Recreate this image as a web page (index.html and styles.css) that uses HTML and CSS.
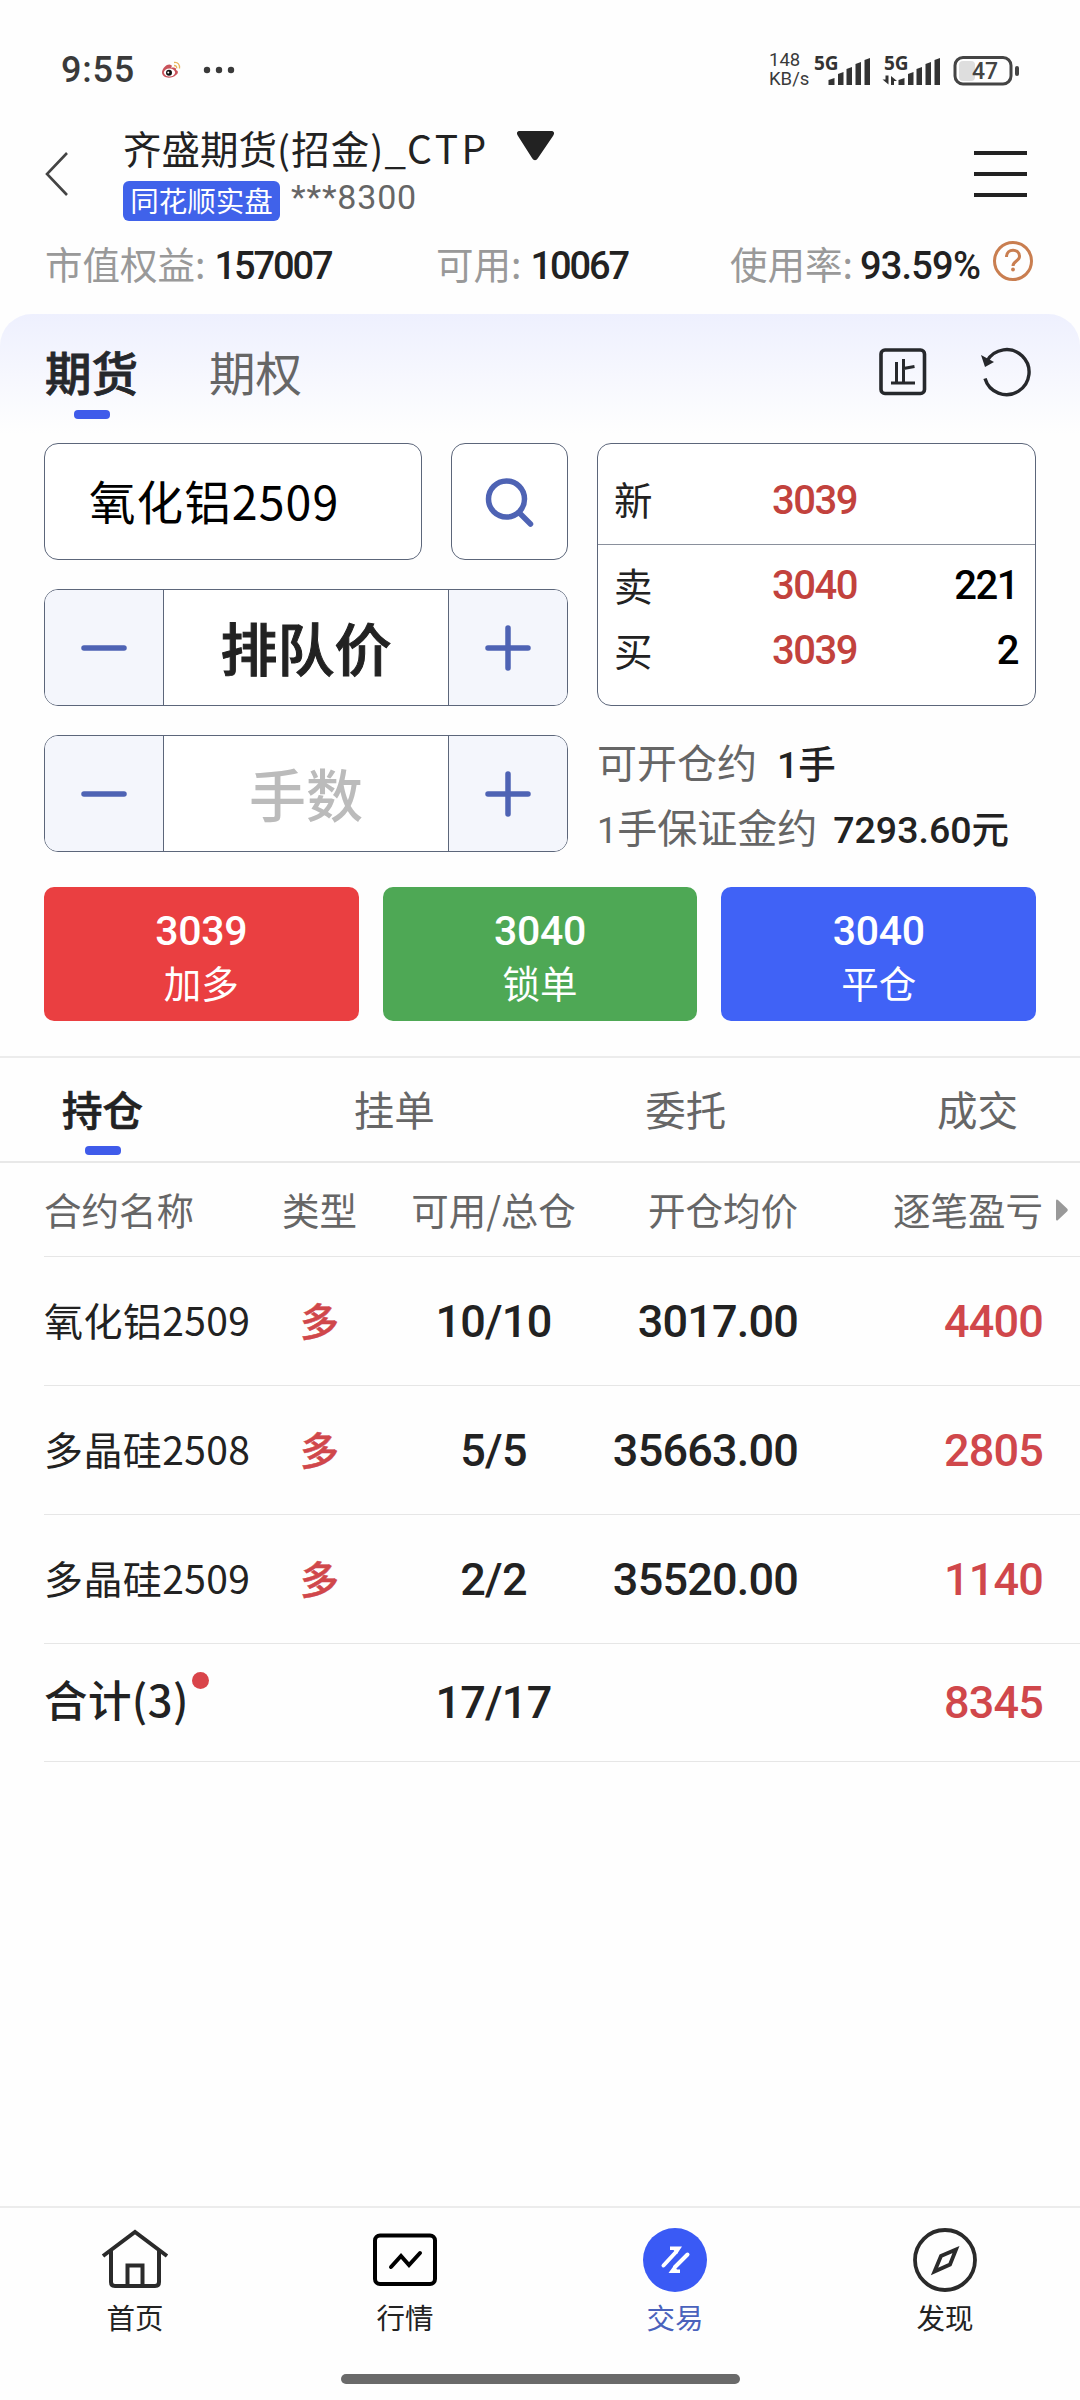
FILE: index.html
```html
<!DOCTYPE html>
<html lang="zh-CN">
<head>
<meta charset="utf-8">
<title>期货交易</title>
<link rel="stylesheet" href="styles.css">
</head>
<body>
<div class="page">
    <div class="status">
        <span class="time num">9:55</span>
        <svg class="weibo" width="20" height="18" viewBox="0 0 20 18">
            <path d="M1 11C2 6 7 2 10 4c1 0 1 2 0 3 3-1 6 0 5 2 3 1 2 4 0 5-4 4-14 4-14-3z" fill="#c8525a"/>
            <ellipse cx="8.5" cy="11.5" rx="5.6" ry="4" fill="#fff"/>
            <circle cx="8" cy="11.8" r="3" fill="#111"/>
            <circle cx="7.3" cy="11.4" r="1" fill="#fff"/>
            <path d="M13 1.5c4-.5 6 2 5.500 6M13 4.500c2 0 3 1 2.700 2.800" fill="none" stroke="#e8b45c" stroke-width="1.3"/>
        </svg>
        <svg class="dots" width="32" height="8" viewBox="0 0 32 8">
            <circle cx="4" cy="4" r="3.2"/><circle cx="16" cy="4" r="3.2"/><circle cx="28" cy="4" r="3.2"/>
        </svg>
        <div class="speed"><span>148</span><span>KB/s</span></div>
        <svg class="signals" width="206" height="50" viewBox="-1 -8 206 50">
            <g fill="#333">
                <text x="0" y="17" class="net">5G</text>
                <path d="M14.500 32v-5l6-2v7zM24 32V21l5.500-2v13zM32.500 32V16l5.500-2v18zM41.500 32V11l5.500-2v23zM50.500 32V7l5.500-2v27z"/>
                <text x="70" y="17" class="net">5G</text>
                <path d="M84.500 32v-5l6-2v7zM94 32V21l5.500-2v13zM102.500 32V16l5.500-2v18zM111.500 32V11l5.500-2v23zM120.500 32V7l5.500-2v27z"/>
                <path d="M71.500 22.500h3v9l-6-5h3zM77 32v-9l6 5h-3v4z"/>
            </g>
            <rect x="145" y="8" width="16" height="20" rx="4" fill="#dedede"/>
            <rect x="141" y="4.500" width="56" height="26.500" rx="8" fill="none" stroke="#444" stroke-width="3"/>
            <rect x="201" y="13" width="4" height="10" rx="2" fill="#444"/>
            <text x="158" y="26" class="battery">47</text>
        </svg>
    </div>

    <div class="header">
        <svg class="back" width="24" height="48" viewBox="0 0 24 48">
            <path d="M22 3L2 24l20 21" fill="none" stroke="#444" stroke-width="2.600"/>
        </svg>
        <div class="account">
            <div class="account-name">齐盛期货<span class="firm">(招金)_</span><span class="ctp">CTP</span>
                <svg class="caret" width="37" height="30" viewBox="0 0 37 30">
                    <path d="M3 0h31c3 0 4 2 2 5L21 27c-2 3-4 3-6 0L1 5C-1 2 0 0 3 0z" fill="#222"/>
                </svg>
            </div>
            <div class="account-sub">
                <span class="badge">同花顺实盘</span>
                <span class="account-no num">***8300</span>
            </div>
        </div>
        <svg class="menu" width="53" height="48" viewBox="0 0 53 48">
            <path d="M0 3h53M0 24h53M0 45h53" stroke="#222" stroke-width="4.200"/>
        </svg>
    </div>

    <div class="assets">
        <div class="asset">市值权益:<b class="num">157007</b></div>
        <div class="asset asset-mid">可用:<b class="num">10067</b></div>
        <div class="asset asset-end">使用率:<b class="num">93.59%</b></div>
        <svg class="help" width="42" height="42" viewBox="0 0 42 42" fill="none" stroke="#c97e50" stroke-width="3">
            <circle cx="21" cy="21" r="18.500"/>
            <path d="M14.500 17c0-9 13-9 13-.500 0 4.500-6.500 4.500-6.500 9.500"/>
            <circle cx="21" cy="29.500" r="1.900" fill="#c97e50" stroke="none"/>
        </svg>
    </div>

    <div class="panel">
        <div class="kinds">
            <span class="kind active">期货</span>
            <span class="kind">期权</span>
            <svg class="stop" width="48" height="48" viewBox="0 0 48 48" fill="none" stroke="#26282c" stroke-width="3.600">
                <rect x="2" y="2" width="43.500" height="43.500" rx="4"/>
                <path d="M12 35h24M17.500 14v21M24.500 11v24M24.500 20.500l11-2" stroke-width="3"/>
            </svg>
            <svg class="refresh" width="52" height="52" viewBox="0 0 52 52">
                <path d="M5 32.500A22.500 22.500 0 1 0 7 15" fill="none" stroke="#26282c" stroke-width="3.400"/>
                <path d="M1 9l13 7-9 5z" fill="#26282c"/>
            </svg>
        </div>

        <div class="order">
            <div class="order-form">
                <div class="contract-row">
                    <div class="contract">氧化铝2509</div>
                    <div class="search">
                        <svg width="54" height="54" viewBox="0 0 54 54" fill="none" stroke="#4e63b4" stroke-width="5.500">
                            <circle cx="23.500" cy="24" r="18"/>
                            <path d="M36.500 38l11 11" stroke-linecap="round"/>
                        </svg>
                    </div>
                </div>
                <div class="stepper">
                    <div class="step"><svg width="46" height="46"><path d="M3 23h40"/></svg></div>
                    <div class="step-value">排队价</div>
                    <div class="step"><svg width="46" height="46"><path d="M3 23h40M23 3v40"/></svg></div>
                </div>
                <div class="stepper">
                    <div class="step"><svg width="46" height="46"><path d="M3 23h40"/></svg></div>
                    <div class="step-value placeholder">手数</div>
                    <div class="step"><svg width="46" height="46"><path d="M3 23h40M23 3v40"/></svg></div>
                </div>
            </div>
            <div class="order-side">
                <div class="quote">
                    <div class="quote-row last"><span>新</span><b class="num">3039</b></div>
                    <div class="quote-row"><span>卖</span><b class="num">3040</b><i class="num">221</i></div>
                    <div class="quote-row"><span>买</span><b class="num">3039</b><i class="num">2</i></div>
                </div>
                <div class="hint">可开仓约<b><span class="num">1</span>手</b></div>
                <div class="hint hint-margin"><span class="num one">1</span>手保证金约<b><span class="num">7293.60</span>元</b></div>
            </div>
        </div>

        <div class="actions">
            <div class="action buy"><span class="num">3039</span><span>加多</span></div>
            <div class="action lock"><span class="num">3040</span><span>锁单</span></div>
            <div class="action close"><span class="num">3040</span><span>平仓</span></div>
        </div>
    </div>

    <div class="tabs">
        <span class="tab active">持仓</span>
        <span class="tab">挂单</span>
        <span class="tab">委托</span>
        <span class="tab">成交</span>
    </div>

    <div class="table">
        <div class="row head">
            <span>合约名称</span><span>类型</span><span>可用/总仓</span><span class="price">开仓均价</span><span class="profit">逐笔盈亏</span>
            <svg class="more" width="13" height="22" viewBox="0 0 13 22"><path d="M1 2c0-1.500 1-2 2-1l9 8.500c1 1 1 2 0 3L3 21c-1 1-2 .500-2-1z" fill="#999"/></svg>
        </div>
        <div class="row">
            <span>氧化铝2509</span><span class="side">多</span><span class="num">10/10</span><span class="num price">3017.00</span><span class="num profit">4400</span>
        </div>
        <div class="row">
            <span>多晶硅2508</span><span class="side">多</span><span class="num">5/5</span><span class="num price">35663.00</span><span class="num profit">2805</span>
        </div>
        <div class="row">
            <span>多晶硅2509</span><span class="side">多</span><span class="num">2/2</span><span class="num price">35520.00</span><span class="num profit">1140</span>
        </div>
        <div class="row total">
            <span class="sum">合计(3)</span><span></span><span class="num">17/17</span><span></span><span class="num profit">8345</span>
        </div>
    </div>

    <div class="nav">
        <div class="nav-item">
            <svg width="70" height="66" viewBox="0 0 70 66" fill="none" stroke="#2a2a2a" stroke-width="4">
                <path d="M3 29L35 5l32 24M11 24v31q0 4 4 4h40q4 0 4-4V24M27.500 59V38.500h15V59"/>
            </svg>
            <span>首页</span>
        </div>
        <div class="nav-item">
            <svg width="70" height="66" viewBox="0 0 70 66" fill="none" stroke="#000" stroke-width="4">
                <rect x="5" y="8.500" width="60" height="48.500" rx="5"/>
                <path d="M21 40l10-11 8 9 11-12" stroke-linecap="round"/>
            </svg>
            <span>行情</span>
        </div>
        <div class="nav-item current">
            <svg width="70" height="66" viewBox="0 0 70 66">
                <circle cx="35" cy="33" r="32" fill="#3a5af5"/>
                <path d="M23.500 38.500L36 25M35 40L47.500 27.500" stroke="#fff" stroke-width="4" stroke-linecap="round"/>
                <path d="M30 19.500h12l-5 7.500-3.500-4H30zM28.500 46h11.500v-3.500h-3l-3-4z" fill="#fff"/>
            </svg>
            <span>交易</span>
        </div>
        <div class="nav-item">
            <svg width="70" height="66" viewBox="0 0 70 66" fill="none" stroke="#2a2a2a" stroke-width="3.800">
                <circle cx="35" cy="33" r="30"/>
                <path d="M46 22.500L31 29l-6.500 15.500L40 37.500z" stroke-width="3.800"/>
            </svg>
            <span>发现</span>
        </div>
    </div>
    <div class="home-bar"></div>
</div>
</body>
</html>
```

FILE: styles.css
```css
* {
    box-sizing: border-box;
}
body {
    margin: 0;
    background: #fefefe;
    color: #222;
    font-family: "Noto Sans CJK SC", sans-serif;
}
svg {
    display: block;
    flex: none;
}
b, i {
    font-style: normal;
    font-weight: 500;
}
.num {
    font-family: Roboto, "Noto Sans CJK SC", sans-serif;
    font-weight: 500;
}
.page {
    width: 1080px;
    height: 2400px;
    display: flex;
    flex-direction: column;
    overflow: hidden;
    white-space: nowrap;
}

/* status bar */
.status {
    height: 120px;
    padding: 20px 61px 0 61px;
    display: flex;
    align-items: center;
    color: #3a3a3a;
}
.time {
    width: 100px;
    font-size: 36px;
    letter-spacing: 0.8px;
}
.dots {
    margin-left: 22px;
    fill: #3a3a3a;
}
.speed {
    display: flex;
    flex-direction: column;
    margin-left: auto;
    width: 44px;
    font: 18.5px/19px Roboto, sans-serif;
}
.net {
    font: bold 19px "Noto Sans", sans-serif;
}
.battery {
    font: 500 23px Roboto, sans-serif;
    fill: #444;
}

/* account header */
.header {
    height: 110px;
    padding: 0 53px 2px 45px;
    display: flex;
    align-items: center;
}
.account {
    margin-left: 54px;
    flex: 1;
}
.account-name {
    display: flex;
    align-items: center;
    height: 58px;
    padding-bottom: 10px;
    font-size: 38.5px;
    line-height: 48px;
}
.firm {
    letter-spacing: 1.1px;
}
.ctp {
    font-size: 39px;
    letter-spacing: 3.5px;
}
.caret {
    margin-left: 27px;
    margin-top: -2px;
}
.account-sub {
    display: flex;
    height: 44px;
}
.badge {
    width: 157px;
    height: 40px;
    border-radius: 6px;
    background: #4062ea;
    color: #fff;
    font-size: 28.5px;
    line-height: 38px;
    text-align: center;
}
.account-no {
    margin-left: 11px;
    color: #666;
    font-size: 34px;
    font-weight: 400;
    letter-spacing: 0.8px;
    line-height: 32px;
}

/* assets */
.assets {
    height: 84px;
    padding: 0 44px 20px 45px;
    display: flex;
    align-items: center;
    color: #999;
    font-size: 37.5px;
}
.asset {
    width: 391px;
}
.asset-mid {
    width: 294px;
}
.asset-end {
    width: 262px;
}
.asset b {
    margin-left: 9px;
    color: #222;
    font-size: 38px;
    letter-spacing: -2.1px;
}
.asset-end b {
    margin-left: 7px;
    letter-spacing: -0.8px;
}
.help {
    margin-top: -3px;
}

/* order panel */
.panel {
    height: 742px;
    padding: 0 44px;
    border-radius: 32px 32px 0 0;
    background: linear-gradient(#eef0fe, #fefefe 120px);
}
.kinds {
    display: flex;
    align-items: center;
    height: 116px;
    margin-bottom: 13px;
    padding: 0 4px 0 1px;
}
.kind {
    position: relative;
    top: -2px;
    margin-right: 71px;
    color: #666;
    font-size: 46.5px;
}
.kind.active {
    color: #26282c;
    font-weight: 500;
    -webkit-text-stroke: 0.8px;
}
.kind.active::after, .tab.active::after {
    content: "";
    position: absolute;
    left: 50%;
    width: 36px;
    height: 9px;
    margin-left: -18px;
    border-radius: 4px;
    background: #3f5bea;
}
.kind.active::after {
    bottom: -15px;
}
.stop {
    margin-left: auto;
}
.refresh {
    margin-left: 53px;
}
.order {
    display: flex;
    justify-content: space-between;
    height: 409px;
}
.order-form {
    display: flex;
    flex-direction: column;
    gap: 29px;
    width: 524px;
}
.contract-row {
    display: flex;
    justify-content: space-between;
}
.contract, .search, .stepper, .quote {
    border: 1px solid #5c667a;
    border-radius: 14px;
    background: #fff;
}
.contract {
    width: 378px;
    height: 117px;
    padding-left: 44px;
    color: #000;
    font-size: 46.5px;
    letter-spacing: 1.1px;
    line-height: 112px;
}
.search {
    width: 117px;
    display: flex;
    align-items: center;
    justify-content: center;
}
.stepper {
    display: flex;
    height: 117px;
    overflow: hidden;
}
.step {
    width: 118px;
    display: flex;
    align-items: center;
    justify-content: center;
    background: #f4f6fc;
}
.step path {
    fill: none;
    stroke: #4e63b4;
    stroke-width: 5.5;
    stroke-linecap: round;
}
.step-value {
    flex: 1;
    border: solid #5c667a;
    border-width: 0 1px;
    font-size: 57px;
    font-weight: 500;
    -webkit-text-stroke: 1px;
    line-height: 113px;
    text-align: center;
}
.placeholder {
    color: #bbb;
    -webkit-text-stroke: 0;
}
.order-side {
    width: 439px;
}
.quote {
    height: 263px;
    margin-bottom: 24px;
}
.quote-row {
    display: grid;
    grid-template-columns: 158px 100px 1fr;
    align-items: center;
    height: 65px;
    padding: 0 17px 0 16px;
    font-size: 38.5px;
}
.quote-row span {
    padding-bottom: 4px;
}
.quote-row.last {
    height: 101px;
    padding-top: 12px;
    margin-bottom: 8px;
    border-bottom: 1px solid #8a909c;
}
.quote-row .num {
    font-size: 40px;
    letter-spacing: -1.5px;
}
.quote-row b {
    color: #c2423d;
}
.quote-row i {
    color: #000;
    text-align: right;
}
.hint {
    height: 65px;
    color: #666;
    font-size: 40px;
    line-height: 62px;
}
.hint b {
    margin-left: 20px;
    color: #222;
    font-size: 37.5px;
}
.hint-margin b {
    margin-left: 16px;
}
.one {
    font-weight: 400;
    font-size: 36px;
}
.actions {
    display: flex;
    gap: 24px;
    margin-top: 35px;
}
.action {
    flex: 1;
    display: flex;
    flex-direction: column;
    align-items: center;
    height: 134px;
    padding-top: 18px;
    border-radius: 10px;
    color: #fff;
    font-size: 37.5px;
    line-height: 50px;
}
.action .num {
    font-size: 41px;
    line-height: 52px;
    letter-spacing: -0.3px;
}
.buy {
    background: #ea3f41;
}
.lock {
    background: #4ea855;
}
.close {
    background: #4062f6;
}

/* positions */
.tabs {
    display: flex;
    justify-content: space-between;
    height: 107px;
    padding: 0 62px;
    border-top: 2px solid #ececec;
    border-bottom: 2px solid #e8e8e8;
}
.tab {
    position: relative;
    color: #666;
    font-size: 40.5px;
    line-height: 102px;
}
.tab.active {
    color: #222;
    font-weight: 500;
    -webkit-text-stroke: 0.7px;
}
.tab.active::after {
    bottom: 6px;
}
.table {
    margin-left: 44px;
}
.row {
    position: relative;
    display: grid;
    grid-template-columns: 207px 137px 211px 199px 245px;
    align-items: center;
    height: 129px;
    border-bottom: 1px solid #e6e6e6;
    font-size: 39px;
    text-align: center;
}
.row span {
    padding-bottom: 4px;
}
.row span:first-child {
    text-align: left;
    letter-spacing: 0.4px;
}
.row .price, .row .profit {
    text-align: right;
}
.row .num {
    padding-bottom: 0;
    font-size: 45px;
    letter-spacing: -0.8px;
}
.row .profit.num, .side {
    color: #d0474b;
}
.side {
    font-weight: 500;
    -webkit-text-stroke: 0.5px;
}
.row.head {
    height: 94px;
    color: #666;
    font-size: 37.5px;
}
.row.head span {
    padding-bottom: 2px;
    letter-spacing: 0;
}
.more {
    position: absolute;
    left: 1011px;
    top: 36px;
}
.row.total {
    height: 118px;
}
.row .sum {
    position: relative;
    justify-self: start;
    padding-bottom: 8px;
    font-size: 43.5px;
    font-weight: 500;
}
.sum::after {
    content: "";
    position: absolute;
    right: -20px;
    top: 5px;
    width: 17px;
    height: 17px;
    border-radius: 50%;
    background: #d9444a;
}

/* bottom navigation */
.nav {
    display: flex;
    height: 168px;
    margin-top: auto;
    border-top: 2px solid #ececec;
    padding-top: 19px;
}
.nav-item {
    flex: 1;
    display: flex;
    flex-direction: column;
    align-items: center;
    font-size: 28.5px;
    line-height: 48px;
}
.current {
    color: #4a62bc;
}
.home-bar {
    width: 399px;
    height: 10px;
    margin: 0 auto 16px;
    border-radius: 5px;
    background: #6a6a6a;
}
```
